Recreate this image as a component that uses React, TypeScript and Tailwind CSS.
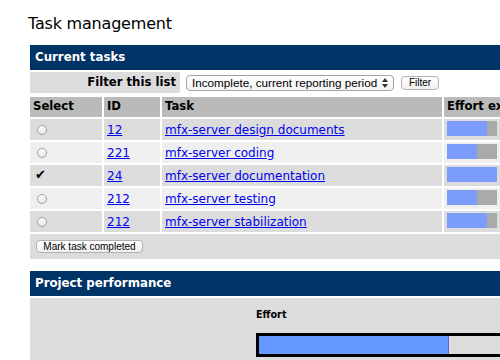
import React from "react";

interface TaskRow {
  id: string;
  task: string;
  effort: number;
  done?: boolean;
}

const tasks: TaskRow[] = [
  { id: "12", task: "mfx-server design documents", effort: 80 },
  { id: "221", task: "mfx-server coding", effort: 60 },
  { id: "24", task: "mfx-server documentation", effort: 100, done: true },
  { id: "212", task: "mfx-server testing", effort: 60 },
  { id: "212", task: "mfx-server stabilization", effort: 80 },
];

function Radio() {
  return (
    <span className="inline-block h-[10px] w-[10px] rounded-full border border-[#a0a0a0] bg-linear-to-b from-white to-[#e6e6e6]" />
  );
}

function SelectArrows() {
  return (
    <svg width="6" height="10" viewBox="0 0 6 10" className="shrink-0">
      <path d="M3 0 L6 4 L0 4 Z" fill="#333" />
      <path d="M0 6 L6 6 L3 10 Z" fill="#333" />
    </svg>
  );
}

function PanelHeader({ title }: { title: string }) {
  return (
    <div className="flex h-[25px] items-center bg-[#003366] px-[5px] text-[11.8px] font-bold text-white">
      {title}
    </div>
  );
}

export default function App() {
  return (
    <div className="relative h-[360px] w-[500px] overflow-hidden bg-white font-['DejaVu_Sans',sans-serif] text-black">
      <h1 className="pl-[28px] pt-[14px] text-[16px] leading-[19px] tracking-[-0.2px]">Task management</h1>

      <div className="ml-[30px] mt-[12px] flex w-[600px] flex-col">
        <PanelHeader title="Current tasks" />

        <div className="mt-[2px] flex h-[21px] items-center">
          <div className="flex h-full w-[150px] items-center justify-end bg-[#dcdcdc] pr-[4px] text-[11.7px] font-bold">
            Filter this list
          </div>
          <div className="ml-[6px] flex h-[16px] w-[208px] items-center justify-between rounded-[4px] border border-[#a4a4a4] bg-linear-to-b from-white to-[#f2f2f2] pl-[5px] pr-[5px] font-['Liberation_Sans',sans-serif] text-[11.7px] leading-none">
            <span>Incomplete, current reporting period</span>
            <SelectArrows />
          </div>
          <div className="ml-[7px] flex h-[14px] w-[38px] items-center justify-center rounded-[4px] border border-[#b4b4b4] bg-linear-to-b from-white to-[#f0f0f0] font-['Liberation_Sans',sans-serif] text-[10px] leading-none">
            Filter
          </div>
        </div>

        <div className="mt-[4px] grid grid-cols-[72px_56px_280px_150px] gap-[2px] text-[12px]">
          {["Select", "ID", "Task", "Effort expended"].map((h) => (
            <div key={h} className="flex h-[20px] items-center whitespace-nowrap bg-[#bababa] pl-[3px] text-[11.7px] font-bold">
              {h}
            </div>
          ))}

          {tasks.map((t, i) => {
            const bg = i % 2 === 0 ? "bg-[#dcdcdc]" : "bg-[#efefef]";
            return (
              <React.Fragment key={i}>
                <div className={`flex h-[21px] items-center ${t.done ? "pl-[5px]" : "pl-[7px]"} ${bg}`}>
                  {t.done ? <span className="-mt-[2px] text-[13px] leading-none">✔</span> : <Radio />}
                </div>
                <div className={`flex h-[21px] items-center pl-[3px] ${bg}`}>
                  <a href="#" className="text-[#0000ee] underline">{t.id}</a>
                </div>
                <div className={`flex h-[21px] items-center pl-[3px] ${bg}`}>
                  <a href="#" className="text-[#0000ee] underline">{t.task}</a>
                </div>
                <div className={`flex h-[21px] items-start pl-[3px] pt-[2px] ${bg}`}>
                  <div className="flex h-[15px] w-[50px] bg-[#aaaaaa]">
                    <div className="h-full bg-[#7b9cfb]" style={{ width: `${t.effort}%` }} />
                  </div>
                </div>
              </React.Fragment>
            );
          })}

          <div className="col-span-4 flex h-[25px] items-center bg-[#dcdcdc] pl-[6px]">
            <div className="flex h-[13px] w-[107px] items-center justify-center rounded-[4px] border border-[#b0b0b0] bg-linear-to-b from-white to-[#f0f0f0] font-['Liberation_Sans',sans-serif] text-[10px] leading-none">
              Mark task completed
            </div>
          </div>
        </div>

        <div className="mt-[12px]">
          <PanelHeader title="Project performance" />
        </div>
        <div className="mt-[2px] flex h-[80px] flex-col bg-[#dcdcdc] pl-[226px] pt-[11px]">
          <div className="text-[9.7px] font-bold leading-[12px]">Effort</div>
          <div className="mt-[12px] flex h-[24px] w-[320px] border-[3px] border-black bg-[#dcdcdc]">
            <div className="h-full w-[190px] border-r border-[#6666cc] bg-[#6699ff]" />
          </div>
        </div>
      </div>
    </div>
  );
}
